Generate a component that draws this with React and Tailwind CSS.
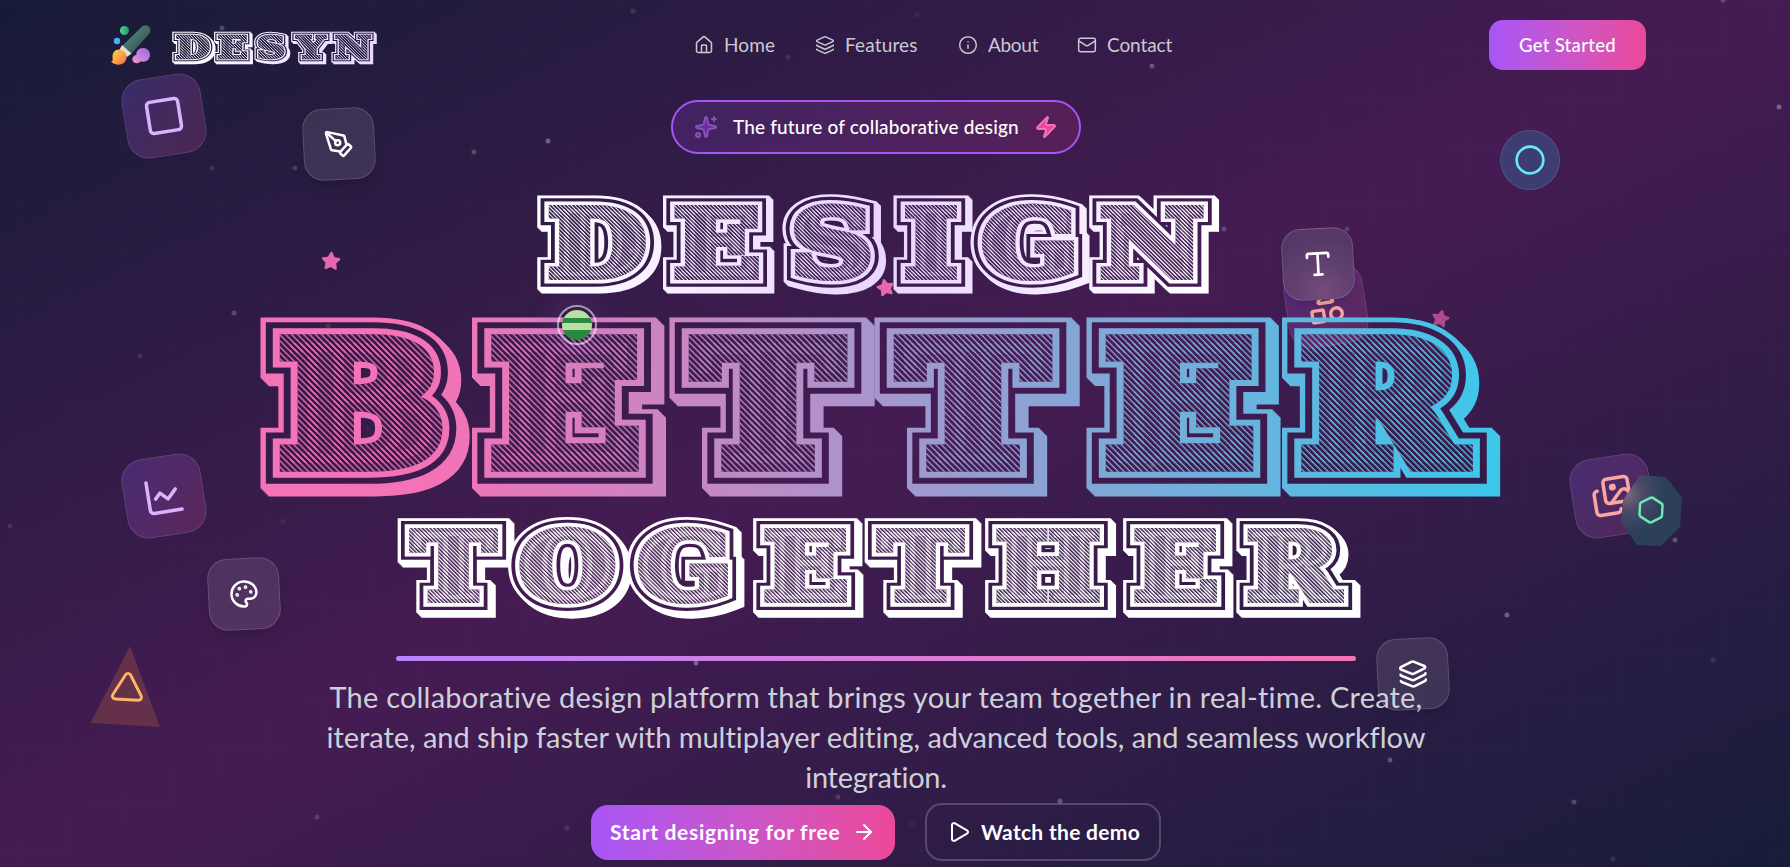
import React from "react";
import {
  House, Layers, Info, Mail, Sparkles, Zap, ArrowRight, Play, Square, PenTool,
  Circle, Type, Shapes, ChartLine, Palette, Triangle, Images, Hexagon, Star,
} from "lucide-react";

/* Engraved slab lettering: hatched face, light rim, dark groove and an extruded edge. */
function Engraved({ id, word, centers, baseline, size, stretch, face, rim, groove, edge, depth, pitch, line, stops, from, to, viewBox, className }) {
  const shifts = Array.from({ length: depth }, (_, i) => i + 1);
  return (
    <svg viewBox={viewBox} className={className} role="img" aria-label={word}>
      <defs>
        <linearGradient id={`${id}-ink`} gradientUnits="userSpaceOnUse" x1={from / stretch} x2={to / stretch} y1="0" y2="0">
          {stops.map(([offset, color]) => <stop key={offset} offset={offset} stopColor={color} />)}
        </linearGradient>
        <pattern id={`${id}-hatch`} patternUnits="userSpaceOnUse" width={pitch} height={pitch}
          patternTransform={`scale(${1 / stretch} 1) rotate(45)`}>
          <rect width={pitch} height={line} fill="#fff" />
        </pattern>
        <mask id={`${id}-mask`} maskUnits="userSpaceOnUse" x="0" y="0" width="1790" height="867">
          <rect width="1790" height="867" fill="#fff" />
          <use href={`#${id}-text`} fill="#000" stroke="#000" strokeWidth={2 * (face + rim + groove)} />
          <use href={`#${id}-text`} fill="#fff" stroke="#fff" strokeWidth={2 * (face + rim)} />
          <use href={`#${id}-text`} fill="#000" stroke="#000" strokeWidth={2 * face} />
          <use href={`#${id}-text`} fill={`url(#${id}-hatch)`} stroke={`url(#${id}-hatch)`} strokeWidth={2 * face} />
        </mask>
      </defs>
      <g mask={`url(#${id}-mask)`} fill={`url(#${id}-ink)`} stroke={`url(#${id}-ink)`}
        strokeWidth={2 * (face + rim + groove + edge)} strokeLinejoin="miter" strokeMiterlimit="2">
        {shifts.map((n) => <use key={n} href={`#${id}-text`} x={n} y={n} />)}
        <text id={`${id}-text`} x={centers.map((c) => c / stretch).join(" ")} y={baseline} textAnchor="middle"
          transform={`scale(${stretch} 1)`} fontSize={size} fontWeight="700" vectorEffect="non-scaling-stroke"
          strokeLinejoin="miter" strokeMiterlimit="2" fontFamily="'DejaVu Serif', serif">
          {word}
        </text>
      </g>
    </svg>
  );
}

const DOTS = [
  [222, 28, "bg-white/20"], [212, 168, "bg-white/10"], [295, 168, "bg-white/15"], [788, 57, "bg-white/10"],
  [917, 15, "bg-white/5"], [1152, 66, "bg-white/25"], [548, 141, "bg-white/30"], [474, 152, "bg-white/20"],
  [1779, 107, "bg-white/30"], [234, 313, "bg-white/20"], [140, 356, "bg-white/10"], [328, 326, "bg-white/10"],
  [10, 526, "bg-white/10"], [696, 663, "bg-white/30"], [1507, 615, "bg-white/30"], [1390, 760, "bg-white/25"],
  [1713, 660, "bg-white/10"], [1060, 801, "bg-white/25"], [838, 797, "bg-white/15"], [317, 817, "bg-white/15"],
  [567, 828, "bg-white/10"], [1574, 802, "bg-white/20"], [1613, 859, "bg-white/10"], [1675, 540, "bg-white/25"],
  [1224, 229, "bg-white/20"], [1347, 229, "bg-white/15"], [1153, 465, "bg-white/15"], [1364, 441, "bg-white/10"],
  [283, 521, "bg-white/5"], [631, 251, "bg-white/20"], [912, 824, "bg-white/5"], [1723, 0, "bg-white/20"], [633, 11, "bg-white/10"],
];

const TILE = "absolute flex size-20 -rotate-9 items-center justify-center rounded-[22px] border border-white/10 bg-linear-to-br from-[#8b5cf6]/25 to-[#ec4899]/20";
const TOOL = "absolute flex size-[72px] -rotate-3 items-center justify-center rounded-[20px] border border-white/15 text-white shadow-lg shadow-black/10";

function Backdrop() {
  return (
    <>
      <div className="absolute inset-0 bg-[linear-gradient(to_right,rgba(255,255,255,0.012)_1px,transparent_1px),linear-gradient(to_bottom,rgba(255,255,255,0.012)_1px,transparent_1px)] bg-[size:50px_50px] bg-[position:21px_0px]" />
      {DOTS.map(([x, y, tone]) => (
        <i key={`${x}-${y}`} className={`absolute size-[5px] -translate-1/2 rounded-full ${tone}`} style={{ left: x, top: y }} />
      ))}
      <div className={`${TILE} left-[124px] top-[76px] text-[#d8b4fe]`}><Square size={42} /></div>
      <div className={`${TILE} left-[124px] top-[456px] text-[#d8b4fe]`}><ChartLine size={42} /></div>
      <div className={`${TILE} left-[1286px] top-[266px] text-[#f9a8a0]`}><Shapes size={40} /></div>
      <div className={`${TILE} left-[1572px] top-[456px] text-[#fca5a5]`}><Images size={42} /></div>
      <div className={`${TOOL} left-[303px] top-[108px] bg-white/10`}><PenTool size={30} /></div>
      <div className={`${TOOL} left-[208px] top-[558px] bg-white/10`}><Palette size={30} /></div>
      <div className={`${TOOL} left-[1282px] top-[228px] bg-[radial-gradient(circle_at_55%_90%,#744b7c_0%,#60406f_40%,#563866_75%)]`}><Type size={32} /></div>
      <div className={`${TOOL} left-[1377px] top-[638px] bg-white/10`}><Layers size={30} /></div>
      <div className="absolute left-[1500px] top-[130px] flex size-[60px] items-center justify-center rounded-full border border-white/10 bg-[#3e3d72] text-[#67e8f9]"><Circle size={32} /></div>
      <svg viewBox="0 0 72 84" className="absolute left-[90px] top-[645px] h-[84px] w-[72px]">
        <polygon points="40,1 0.5,78 70,82" fill="#653049" />
      </svg>
      <Triangle size={35} className="absolute left-[110px] top-[669px] rotate-3 text-[#fdb469]" />
      <svg viewBox="0 0 64 74" className="absolute left-[1620px] top-[474px] h-[74px] w-16">
        <defs>
          <radialGradient id="octagon" gradientUnits="userSpaceOnUse" cx="6" cy="20" r="38">
            <stop offset="0" stopColor="#7c6a7f" /><stop offset=".45" stopColor="#4b4a68" /><stop offset="1" stopColor="#2d405a" />
          </radialGradient>
        </defs>
        <polygon points="20,1 46,3 62,23.5 60,53 41,72 17,71 1,48.5 3,26" fill="url(#octagon)" />
      </svg>
      <Hexagon size={30} className="absolute left-[1636px] top-[495px] rotate-3 text-[#6ee7b7]" />
    </>
  );
}

function Ornaments() {
  return (
    <>
      <Star size={20} className="absolute left-[321px] top-[251px] rotate-3 fill-[#e668ac] text-[#e668ac]" />
      <Star size={19} className="absolute left-[876px] top-[278px] -rotate-12 fill-[#e668ac] text-[#e668ac]" />
      <Star size={19} className="absolute left-[1431px] top-[309px] rotate-12 fill-[#e668ac] text-[#e668ac] opacity-65" />
      <div className="absolute left-[557px] top-[305px] flex size-[40px] items-center justify-center rounded-full border-2 border-white/55 shadow-[0_0_24px_6px_rgba(168,85,247,0.15)]">
        <div className="size-[30px] shrink-0 rounded-full bg-[linear-gradient(#b9dfa4_0_8px,#288a41_8px_13px,#b9dfa4_13px_20px,#288a41_20px)]" />
      </div>
    </>
  );
}

function BrushLogo() {
  return (
    <svg viewBox="0 0 40 40" className="h-10 w-10">
      <defs>
        <linearGradient id="handle" x1="0" y1="0" x2="1" y2="1"><stop stopColor="#5c8a84" /><stop offset=".5" stopColor="#456c69" /><stop offset="1" stopColor="#2e3f48" /></linearGradient>
        <linearGradient id="flame" x1="0" y1="0" x2="1" y2="1"><stop stopColor="#fbd34a" /><stop offset=".5" stopColor="#fca63c" /><stop offset="1" stopColor="#fb5b57" /></linearGradient>
        <linearGradient id="plum" x1="0" y1="1" x2="1" y2="0"><stop stopColor="#f59ac0" /><stop offset=".5" stopColor="#c07fe0" /><stop offset="1" stopColor="#9268cc" /></linearGradient>
        <linearGradient id="mint"><stop stopColor="#54d39b" /><stop offset="1" stopColor="#179a61" /></linearGradient>
      </defs>
      <path d="M11 21 30 2.5C32 .3 36 0 38 1.500 40 3.500 40 6.500 38 9L20 29Z" fill="url(#handle)" />
      <path d="m11 20 9.500 8.500-4.500 3.500-7.500-7.500Z" fill="#e9dcd2" />
      <path d="M8.500 24.500c3.500.5 7.500 3.500 7 8.500C15 38 10 40.500 5.500 39.500 3.500 39 .5 38 .3 36c2 0 1.200-2 1.200-4.500 0-4 3-7.500 7-7Z" fill="url(#flame)" />
      <path d="M25.500 30c-.8-4 3-7.500 7-7 4 .3 7 3.800 6.500 7.500-.5 4-3.500 6.500-7 6.200-1.500 0-2.500-.4-3.500.5-1.500 1.500-5.500 1.500-6.800-1.500C20.500 32.500 23 30 25.500 30Z" fill="url(#plum)" />
      <circle cx="13.500" cy="5.500" r="4.500" fill="url(#mint)" />
      <circle cx="6" cy="16" r="3.200" fill="#3fb3f2" />
    </svg>
  );
}

const WHITE_LILAC = [[0, "#ffffff"], [0.5, "#e9d5ff"], [1, "#ffffff"]];

export default function App() {
  return (
    <div className="relative h-[867px] w-[1790px] overflow-hidden bg-[linear-gradient(to_bottom_right,#171b37_0%,#451b53_50%,#171d3a_100%)] font-['Lato',sans-serif]">
      <Backdrop />

      <header className="relative flex h-[90px] w-[1752px] items-center pl-[111px]">
        <div className="flex w-[583px] items-center gap-[15px]">
          <BrushLogo />
          <Engraved id="logo" word="DESYN" centers={[193, 232.500, 271, 311, 353]} baseline={58} size={29.500} stretch={1.32}
            face={1.500} rim={1.200} groove={1.100} edge={1.100} depth={2} pitch={2} line={0.5} from={172} to={376}
            stops={[[0, "#ffffff"], [1, "#e9d5ff"]]} viewBox="166 24 220 42" className="h-[42px] w-[220px] overflow-visible" />
        </div>
        <nav className="flex w-[795px] text-[19px] text-[#cbc8d2]">
          <a className="flex w-[121px] items-center gap-[10px] tracking-[0.1px]"><House size={20} strokeWidth={1.8} />Home</a>
          <a className="flex w-[143px] items-center gap-[10px] tracking-[0.15px]"><Layers size={20} strokeWidth={1.8} />Features</a>
          <a className="flex w-[119px] items-center gap-[10px] tracking-[-0.3px]"><Info size={20} strokeWidth={1.8} />About</a>
          <a className="flex w-[120px] items-center gap-[10px] tracking-[-0.1px]"><Mail size={20} strokeWidth={1.8} />Contact</a>
        </nav>
        <button className="h-[50px] w-[157px] rounded-[14px] bg-linear-to-r from-[#a855f7] to-[#ec4899] pt-0.5 text-[18.500px] font-medium tracking-[0.3px] text-white">Get Started</button>
      </header>

      <main className="relative flex w-[1752px] flex-col items-center pt-[10px]">
        <div className="flex h-[54px] w-[410px] items-center rounded-full border-2 border-[#a855f7] bg-linear-to-r from-purple-500/15 to-pink-500/15 pl-[21px] text-[19px] font-medium text-white">
          <Sparkles size={24} className="shrink-0 fill-[#6d28a8] text-[#8455b0]" />
          <span className="w-[316px] shrink-0 whitespace-nowrap pl-[15px] tracking-[0.15px]">The future of collaborative design</span>
          <Zap size={24} className="shrink-0 fill-[#ec4899] text-[#f472b6]" />
        </div>

        <h1 className="mt-9 flex flex-col items-center">
          <Engraved id="design" word="DESIGN" centers={[597, 717, 832, 931, 1030, 1152]} baseline={276} size={91} stretch={1.23}
            face={4.500} rim={4} groove={3.500} edge={3} depth={4} pitch={2.700} line={1} from={536} to={1219}
            stops={WHITE_LILAC} viewBox="251 190 1250 110" className="h-[110px] w-[1250px] overflow-visible" />
          <Engraved id="better" word="BETTER" centers={[362, 565.5, 768, 973, 1180, 1382]} baseline={463.500} size={165} stretch={1.16}
            face={9.500} rim={6.500} groove={6.500} edge={5} depth={8} pitch={4.240} line={1.300} from={259} to={1500}
            stops={[[0, "#f472b6"], [0.13, "#f472b6"], [1, "#3cc8ea"]]} viewBox="251 300 1250 204" className="h-[204px] w-[1250px] overflow-visible" />
          <Engraved id="together" word="TOGETHER" centers={[453.5, 567.5, 685, 806, 920.5, 1048, 1176, 1293]} baseline={599} size={92} stretch={1.19}
            face={4.500} rim={4} groove={3.500} edge={3} depth={5} pitch={2.700} line={1.200} from={398} to={1360}
            stops={[[0, "#ffffff"], [1, "#ffffff"]]} viewBox="251 504 1250 124" className="h-[124px] w-[1250px] overflow-visible" />
        </h1>

        <div className="mt-7 h-[5px] w-[960px] rounded-full bg-linear-to-r from-[#b983ff] to-[#f472b6]" />

        <p className="mt-4 whitespace-nowrap text-center text-[29px] leading-10 text-[#cdd0d8]">
          <span className="block tracking-[0.2px]">The collaborative design platform that brings your team together in real-time. Create,</span>
          <span className="block tracking-[-0.05px]">iterate, and ship faster with multiplayer editing, advanced tools, and seamless workflow</span>
          <span className="block tracking-[-0.3px]">integration.</span>
        </p>

        <div className="mt-[6px] flex items-center gap-[30px] text-[21px] font-bold text-white">
          <button className="flex h-[55px] w-[304px] items-center gap-3 rounded-[17px] bg-linear-to-r from-[#a855f7] to-[#ec4899] pl-[19px]">
            <span className="w-[230px] whitespace-nowrap text-left tracking-[0.7px]">Start designing for free</span><ArrowRight size={24} />
          </button>
          <button className="flex h-[58px] w-[236px] items-center gap-[10px] rounded-[17px] border-2 border-white/20 pl-5 tracking-[0.3px]">
            <Play size={24} />Watch the demo
          </button>
        </div>
      </main>
      <Ornaments />
    </div>
  );
}
